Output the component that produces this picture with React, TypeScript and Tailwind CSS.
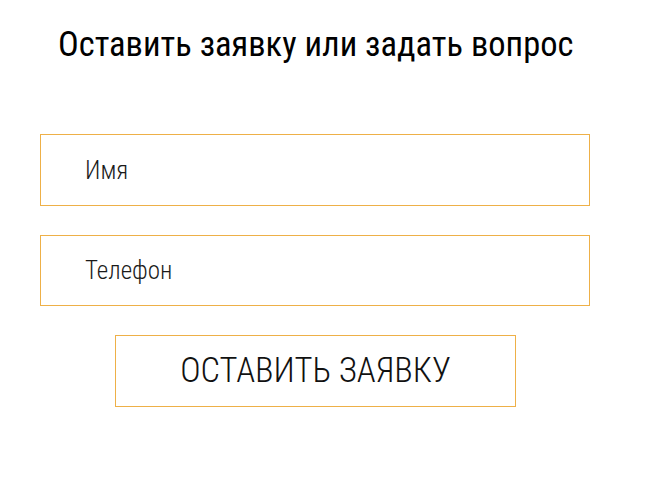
export default function App() {
  return (
    <div className="w-[647px] h-[477px] bg-white font-['Roboto_Condensed','Roboto',sans-serif] [font-stretch:condensed]">
      <h2 className="pt-[22px] pl-[58px] text-[34.5px] leading-[44px] text-black font-normal">
        Оставить заявку или задать вопрос
      </h2>
      <form className="mt-[68px] pl-[40px] flex flex-col items-start">
        <input
          type="text"
          placeholder="Имя"
          className="w-[550px] h-[72px] border border-solid border-[#eeb048] pl-[44px] text-[25px] font-light text-[#1a1a1a] placeholder:text-[#1a1a1a] placeholder:opacity-100 outline-none"
        />
        <input
          type="text"
          placeholder="Телефон"
          className="mt-[29px] w-[550px] h-[71px] border border-solid border-[#eeb048] pl-[44px] text-[25px] font-light text-[#1a1a1a] placeholder:text-[#1a1a1a] placeholder:opacity-100 outline-none"
        />
        <button
          type="button"
          className="mt-[29px] ml-[75px] w-[401px] h-[72px] border border-solid border-[#eeb048] text-[34.5px] font-light text-[#111] bg-white"
        >
          ОСТАВИТЬ ЗАЯВКУ
        </button>
      </form>
    </div>
  );
}
